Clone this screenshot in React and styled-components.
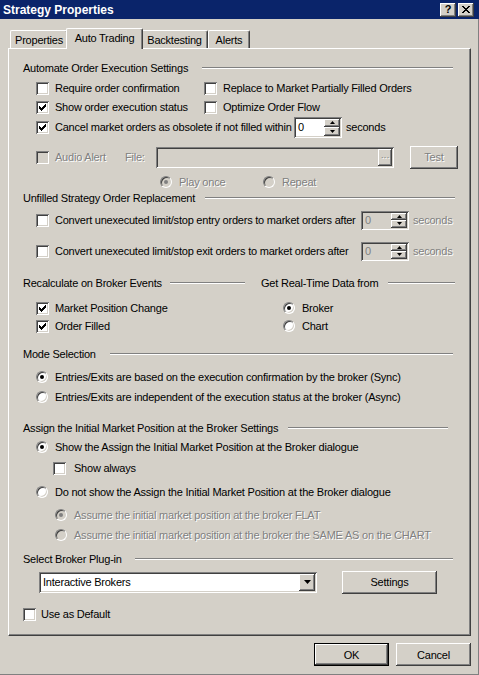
import React from 'react';
import styled, { createGlobalStyle, css } from 'styled-components';

const face = '#D4D0C8';
const shade = '#808080';
const dark = '#404040';
const light = '#FFFFFF';

const GlobalStyle = createGlobalStyle`
  html, body { margin: 0; padding: 0; background: ${face}; }
  body {
    font-family: "Liberation Sans", Arial, sans-serif;
    font-size: 11px;
    letter-spacing: -0.22px;
    color: #000;
  }
  * { box-sizing: border-box; }
`;

const raised = css`
  box-shadow: inset -1px -1px ${dark}, inset 1px 1px ${light},
    inset -2px -2px ${shade}, inset 2px 2px ${face};
`;

const sunken = css`
  box-shadow: inset 1px 1px ${shade}, inset -1px -1px ${light},
    inset 2px 2px ${dark}, inset -2px -2px ${face};
`;

const Window = styled.div`
  width: 479px;
  height: 675px;
  background: ${face};
  display: flex;
  flex-direction: column;
  box-shadow: inset -1px -1px ${shade};
`;

const TitleBar = styled.div`
  height: 19px;
  flex: none;
  background: #0a246a;
  display: flex;
  align-items: center;
  padding: 0 5px 0 3px;
  color: #fff;
  font-weight: bold;
  font-size: 12px;
  letter-spacing: 0;
`;

const Caption = styled.span`
  flex: 1;
`;

const CaptionButton = styled.div`
  width: 16px;
  height: 14px;
  margin-left: ${(p) => p.$gap || 0}px;
  background: ${face};
  ${raised};
  display: flex;
  align-items: center;
  justify-content: center;
  color: #000;
  font-size: 11px;
  font-weight: bold;
  line-height: 1;
`;

const Body = styled.div`
  flex: 1;
  display: flex;
  flex-direction: column;
  padding: 9px 8px 0 8px;
`;

const TabStrip = styled.div`
  height: 20px;
  display: flex;
  align-items: flex-end;
  padding-left: 2px;
  position: relative;
  z-index: 1;
`;

const Tab = styled.div`
  width: ${(p) => p.$w}px;
  height: ${(p) => (p.$active ? 21 : 18)}px;
  margin: 0 ${(p) => (p.$active ? -2 : 0)}px ${(p) => (p.$active ? -1 : 0)}px;
  align-self: ${(p) => (p.$active ? 'flex-start' : 'flex-end')};
  background: ${face};
  border-top: 1px solid ${light};
  border-left: 1px solid ${light};
  border-right: 1px solid ${dark};
  border-radius: 2px 2px 0 0;
  box-shadow: inset -1px 0 ${shade};
  display: flex;
  align-items: ${(p) => (p.$active ? 'flex-start' : 'center')};
  padding-top: ${(p) => (p.$active ? 3 : 0)}px;
  justify-content: center;
  white-space: nowrap;
  position: relative;
  z-index: ${(p) => (p.$active ? 2 : 0)};
`;

const Panel = styled.div`
  height: 588px;
  border-top: 1px solid ${light};
  border-left: 1px solid ${light};
  border-right: 1px solid ${dark};
  border-bottom: 1px solid ${dark};
  box-shadow: inset -1px -1px ${shade};
  padding: 11px 15px 0 14px;
  display: flex;
  flex-direction: column;
`;

const Header = styled.div`
  height: 16px;
  margin-top: ${(p) => p.$mt || 0}px;
  margin-right: ${(p) => p.$end || 0}px;
  display: flex;
  align-items: center;
  white-space: nowrap;
`;

const Rule = styled.div`
  flex: 1;
  height: 2px;
  margin-left: ${(p) => p.$gap || 12}px;
  border-top: 1px solid ${shade};
  border-bottom: 1px solid ${light};
`;

const Row = styled.div`
  height: 16px;
  margin-top: ${(p) => p.$mt || 0}px;
  padding-left: ${(p) => p.$indent || 0}px;
  display: flex;
  align-items: center;
  white-space: nowrap;
`;

const Columns = styled.div`
  display: grid;
  grid-template-columns: 238px 1fr;
  margin-top: ${(p) => p.$mt || 0}px;
`;

const Column = styled.div`
  display: flex;
  flex-direction: column;
`;

const Item = styled.label`
  display: flex;
  align-items: center;
  gap: ${(p) => p.$gap || 6}px;
  width: ${(p) => (p.$w ? `${p.$w}px` : 'auto')};
  flex: none;
`;

const Text = styled.span`
  color: ${(p) => (p.$disabled ? shade : '#000')};
  text-shadow: ${(p) => (p.$disabled ? `1px 1px ${light}` : 'none')};
  width: ${(p) => (p.$w ? `${p.$w}px` : 'auto')};
  margin-left: ${(p) => p.$ml || 0}px;
  flex: none;
`;

const Box = styled.span`
  width: 13px;
  height: 13px;
  flex: none;
  background: ${(p) => (p.$disabled ? face : light)};
  ${sunken};
  display: flex;
  align-items: center;
  justify-content: center;
`;

const RadioRing = styled.span`
  width: 12px;
  height: 12px;
  flex: none;
  border-radius: 50%;
  border: 1px solid;
  border-color: ${shade} ${light} ${light} ${shade};
  background: ${(p) => (p.$disabled ? face : light)};
  box-shadow: inset 1px 1px ${dark}, inset -1px -1px ${face};
  display: flex;
  align-items: center;
  justify-content: center;
`;

const RadioDot = styled.span`
  width: 4px;
  height: 4px;
  border-radius: 50%;
  background: ${(p) => (p.$disabled ? shade : '#000')};
`;

const SpinBox = styled.div`
  width: 48px;
  height: ${(p) => (p.$disabled ? 19 : 21)}px;
  flex: none;
  display: flex;
  padding: 2px;
  background: ${(p) => (p.$disabled ? face : light)};
  ${sunken};
`;

const SpinValue = styled.span`
  flex: 1;
  padding-left: 2px;
  display: flex;
  align-items: center;
  color: ${(p) => (p.$disabled ? shade : '#000')};
`;

const SpinButtons = styled.div`
  width: 16px;
  display: flex;
  flex-direction: column;
`;

const SpinHalf = styled.div`
  flex: 1;
  background: ${face};
  ${raised};
  display: flex;
  align-items: center;
  justify-content: center;
`;

const Edit = styled.div`
  width: ${(p) => p.$w}px;
  height: 21px;
  flex: none;
  display: flex;
  justify-content: flex-end;
  padding: 2px;
  background: ${face};
  ${sunken};
`;

const EllipsisButton = styled.div`
  width: 14px;
  background: ${face};
  ${raised};
  color: ${shade};
  font-size: 9px;
  display: flex;
  align-items: center;
  justify-content: center;
  text-shadow: 1px 1px ${light};
`;

const Button = styled.div`
  width: ${(p) => p.$w}px;
  height: 23px;
  flex: none;
  margin-left: ${(p) => p.$ml || 0}px;
  background: ${face};
  display: flex;
  align-items: center;
  justify-content: center;
  color: ${(p) => (p.$disabled ? shade : '#000')};
  text-shadow: ${(p) => (p.$disabled ? `1px 1px ${light}` : 'none')};
  ${raised};
  ${(p) =>
    p.$default &&
    css`
      border: 1px solid #000;
    `}
`;

const Combo = styled.div`
  width: 278px;
  height: 21px;
  flex: none;
  display: flex;
  padding: 2px;
  background: ${light};
  ${sunken};
`;

const ComboText = styled.span`
  flex: 1;
  display: flex;
  align-items: center;
  padding-left: 2px;
`;

const ComboButton = styled.div`
  width: 16px;
  background: ${face};
  ${raised};
  display: flex;
  align-items: center;
  justify-content: center;
`;

const Footer = styled.div`
  margin-top: 7px;
  display: flex;
  justify-content: flex-end;
  gap: 7px;
`;

const Block = styled.div`
  display: flex;
  flex-direction: column;
`;

const CheckMark = () => (
  <svg width="7" height="7" viewBox="0 0 7 7" shapeRendering="crispEdges">
    <path d="M6 0h1v3h-1v1h-1v1h-1v1h-1v1h-1v-1h-1v-1h-1v-3h1v1h1v1h1v-1h1v-1h1z" fill="#000" />
  </svg>
);

const Arrow = ({ up, size = 'small' }) => {
  const w = size === 'small' ? 5 : 7;
  const h = size === 'small' ? 3 : 4;
  const pts = up ? `0,${h} ${w},${h} ${w / 2},0` : `0,0 ${w},0 ${w / 2},${h}`;
  return (
    <svg width={w} height={h} viewBox={`0 0 ${w} ${h}`}>
      <polygon points={pts} fill="#000" />
    </svg>
  );
};

const CloseGlyph = () => (
  <svg width="8" height="7" viewBox="0 0 8 7" shapeRendering="crispEdges">
    <path d="M0 0h2v1h1v1h2v-1h1v-1h2v1h-1v1h-1v1h-1v1h1v1h1v1h1v1h-2v-1h-1v-1h-2v1h-1v1h-2v-1h1v-1h1v-1h1v-1h-1v-1h-1v-1h-1z" fill="#000" />
  </svg>
);

const Check = ({ checked, disabled, label, w, gap }) => (
  <Item $w={w} $gap={gap}>
    <Box $disabled={disabled}>{checked && <CheckMark />}</Box>
    <Text $disabled={disabled}>{label}</Text>
  </Item>
);

const Radio = ({ checked, disabled, label, w }) => (
  <Item $w={w} $gap={7}>
    <RadioRing $disabled={disabled}>{checked && <RadioDot $disabled={disabled} />}</RadioRing>
    <Text $disabled={disabled}>{label}</Text>
  </Item>
);

const Spin = ({ disabled }) => (
  <SpinBox $disabled={disabled}>
    <SpinValue $disabled={disabled}>0</SpinValue>
    <SpinButtons>
      <SpinHalf>
        <Arrow up />
      </SpinHalf>
      <SpinHalf>
        <Arrow />
      </SpinHalf>
    </SpinButtons>
  </SpinBox>
);

const Section = ({ title, mt, end, gap }) => (
  <Header $mt={mt} $end={end}>
    <span>{title}</span>
    <Rule $gap={gap} />
  </Header>
);

export default function App() {
  return (
    <>
      <GlobalStyle />
      <Window>
        <TitleBar>
          <Caption>Strategy Properties</Caption>
          <CaptionButton>?</CaptionButton>
          <CaptionButton $gap={2}>
            <CloseGlyph />
          </CaptionButton>
        </TitleBar>
        <Body>
          <TabStrip>
            <Tab $w={58}>Properties</Tab>
            <Tab $w={77} $active>
              Auto Trading
            </Tab>
            <Tab $w={67}>Backtesting</Tab>
            <Tab $w={42}>Alerts</Tab>
          </TabStrip>
          <Panel>
            <Section title="Automate Order Execution Settings" end={2} gap={14} />
            <Row $mt={4} $indent={13}>
              <Check label="Require order confirmation" w={168} />
              <Check label="Replace to Market Partially Filled Orders" />
            </Row>
            <Row $mt={3} $indent={13}>
              <Check checked label="Show order execution status" w={168} />
              <Check label="Optimize Order Flow" />
            </Row>
            <Row $mt={4} $indent={13}>
              <Check checked label="Cancel market orders as obsolete if not filled within" w={258} />
              <Spin />
              <Text $ml={4}>seconds</Text>
            </Row>
            <Row $mt={14} $indent={13}>
              <Check disabled label="Audio Alert" w={89} />
              <Text $disabled $w={31}>
                File:
              </Text>
              <Edit $w={238}>
                <EllipsisButton>···</EllipsisButton>
              </Edit>
              <Button $w={48} $ml={16} $disabled>
                Test
              </Button>
            </Row>
            <Row $mt={9} $indent={137}>
              <Radio disabled checked label="Play once" w={103} />
              <Radio disabled label="Repeat" />
            </Row>

            <Section title="Unfilled Strategy Order Replacement" end={0} gap={10} />
            <Row $mt={6} $indent={13}>
              <Check label="Convert unexecuted limit/stop entry orders to market orders after" w={325} />
              <Spin disabled />
              <Text $disabled $ml={4}>
                seconds
              </Text>
            </Row>
            <Row $mt={15} $indent={13}>
              <Check label="Convert unexecuted limit/stop exit orders to market orders after" w={325} />
              <Spin disabled />
              <Text $disabled $ml={4}>
                seconds
              </Text>
            </Row>

            <Columns $mt={16}>
              <Column>
                <Section title="Recalculate on Broker Events" end={16} gap={8} />
                <Row $mt={9} $indent={13}>
                  <Check checked label="Market Position Change" />
                </Row>
                <Row $mt={2} $indent={13}>
                  <Check checked label="Order Filled" />
                </Row>
              </Column>
              <Column>
                <Section title="Get Real-Time Data from" end={0} gap={10} />
                <Row $mt={9} $indent={22}>
                  <Radio checked label="Broker" />
                </Row>
                <Row $mt={2} $indent={22}>
                  <Radio label="Chart" />
                </Row>
              </Column>
            </Columns>

            <Block>
              <Section title="Mode Selection" mt={12} end={2} gap={14} />
              <Row $mt={7} $indent={13}>
                <Radio checked label="Entries/Exits are based on the execution confirmation by the broker (Sync)" />
              </Row>
              <Row $mt={4} $indent={13}>
                <Radio label="Entries/Exits are independent of the execution status at the broker (Async)" />
              </Row>
            </Block>

            <Block>
              <Section title="Assign the Initial Market Position at the Broker Settings" mt={15} end={7} gap={10} />
              <Row $mt={3} $indent={13}>
                <Radio checked label="Show the Assign the Initial Market Position at the Broker dialogue" />
              </Row>
              <Row $mt={5} $indent={30}>
                <Check label="Show always" gap={8} />
              </Row>
              <Row $mt={8} $indent={13}>
                <Radio label="Do not show the Assign the Initial Market Position at the Broker dialogue" />
              </Row>
              <Row $mt={7} $indent={32}>
                <Radio disabled checked label="Assume the initial market position at the broker FLAT" />
              </Row>
              <Row $mt={4} $indent={32}>
                <Radio disabled label="Assume the initial market position at the broker the SAME AS on the CHART" />
              </Row>
            </Block>

            <Block>
              <Section title="Select Broker Plug-in" mt={8} end={2} gap={13} />
              <Row $mt={7} $indent={16}>
                <Combo>
                  <ComboText>Interactive Brokers</ComboText>
                  <ComboButton>
                    <Arrow size="big" />
                  </ComboButton>
                </Combo>
                <Button $w={95} $ml={25}>
                  Settings
                </Button>
              </Row>
              <Row $mt={16}>
                <Check label="Use as Default" gap={5} />
              </Row>
            </Block>
          </Panel>
          <Footer>
            <Button $w={75} $default>
              OK
            </Button>
            <Button $w={75}>Cancel</Button>
          </Footer>
        </Body>
      </Window>
    </>
  );
}
